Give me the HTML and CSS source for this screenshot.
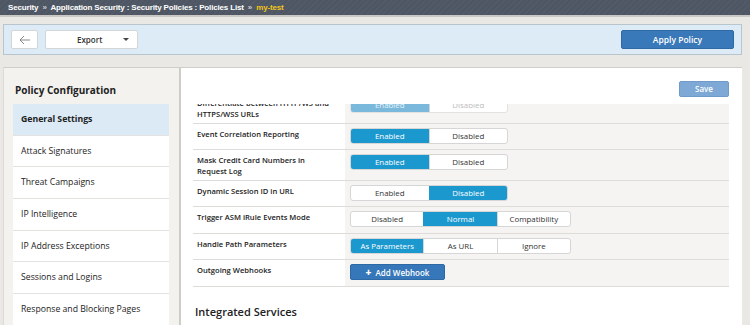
FILE: index.html
```html
<!DOCTYPE html>
<html lang="en">

<head>
    <meta charset="UTF-8">
    <title>Policies List - my-test</title>
    <link rel="stylesheet" href="styles.css">
</head>

<body>
    <!-- breadcrumb bar -->
    <div class="topBar">
        <span>Security</span>
        <span class="sep">&raquo;</span>
        <span>Application Security : Security Policies : Policies List</span>
        <span class="sep">&raquo;</span>
        <span class="current">my-test</span>
    </div>

    <!-- toolbar -->
    <div class="toolBar">
        <div class="backBtn">
            <svg width="12" height="10" viewBox="0 0 12 10">
                <path d="M5 1 L1 5 L5 9 M1 5 H11" fill="none" stroke="#8a8a8a" stroke-width="1"/>
            </svg>
        </div>
        <div class="exportBtn">
            <span>Export</span>
            <span class="caret"></span>
        </div>
        <div class="applyBtn">Apply Policy</div>
    </div>

    <div class="mainNode">
        <!-- left menu -->
        <div class="sideNode">
            <div class="sideTitle">Policy Configuration</div>
            <ul class="sideList">
                <li class="active">General Settings</li>
                <li>Attack Signatures</li>
                <li>Threat Campaigns</li>
                <li>IP Intelligence</li>
                <li>IP Address Exceptions</li>
                <li>Sessions and Logins</li>
                <li>Response and Blocking Pages</li>
            </ul>
        </div>

        <!-- settings -->
        <div class="contentNode">
            <div class="contentHead">
                <div class="saveBtn">Save</div>
            </div>
            <div class="scrollNode">
                <div class="settingList">
                    <div class="row tall">
                        <div class="label">Differentiate between HTTP/WS and HTTPS/WSS URLs</div>
                        <div class="value">
                            <div class="toggle two faded">
                                <span class="on">Enabled</span><span>Disabled</span>
                            </div>
                        </div>
                    </div>
                    <div class="row">
                        <div class="label">Event Correlation Reporting</div>
                        <div class="value">
                            <div class="toggle two">
                                <span class="on">Enabled</span><span>Disabled</span>
                            </div>
                        </div>
                    </div>
                    <div class="row tall">
                        <div class="label">Mask Credit Card Numbers in Request Log</div>
                        <div class="value">
                            <div class="toggle two">
                                <span class="on">Enabled</span><span>Disabled</span>
                            </div>
                        </div>
                    </div>
                    <div class="row">
                        <div class="label">Dynamic Session ID in URL</div>
                        <div class="value">
                            <div class="toggle two">
                                <span>Enabled</span><span class="on">Disabled</span>
                            </div>
                        </div>
                    </div>
                    <div class="row">
                        <div class="label">Trigger ASM iRule Events Mode</div>
                        <div class="value">
                            <div class="toggle three">
                                <span>Disabled</span><span class="on">Normal</span><span>Compatibility</span>
                            </div>
                        </div>
                    </div>
                    <div class="row">
                        <div class="label">Handle Path Parameters</div>
                        <div class="value">
                            <div class="toggle three">
                                <span class="on">As Parameters</span><span>As URL</span><span>Ignore</span>
                            </div>
                        </div>
                    </div>
                    <div class="row">
                        <div class="label">Outgoing Webhooks</div>
                        <div class="value">
                            <div class="addBtn"><b>+</b> Add Webhook</div>
                        </div>
                    </div>
                </div>
                <div class="sectionTitle">Integrated Services</div>
            </div>
        </div>
    </div>
</body>

</html>
```

FILE: styles.css
```css
* {
    margin: 0;
    padding: 0;
    list-style: none;
    box-sizing: border-box;
}

html, body {
    height: 100%;
}

body {
    display: flex;
    flex-direction: column;
    background: #e9e8e4;
    font-family: "Open Sans", "Liberation Sans", sans-serif;
    color: #222;
    overflow: hidden;
}

/* breadcrumb */
.topBar {
    height: 17px;
    padding-left: 8px;
    line-height: 15px;
    font-family: "Liberation Sans", Arial, sans-serif;
    font-size: 8px;
    font-weight: bold;
    letter-spacing: -0.16px;
    color: #fff;
    background: repeating-linear-gradient(135deg, #515a66 0, #515a66 2px, #4d5662 2px, #4d5662 4px);
    border-bottom: 2px solid #c9c8c4;
    white-space: nowrap;
}

.topBar .sep {
    color: #c8ccd2;
    margin: 0 2px;
}

.topBar .current {
    color: #f2c518;
}

/* toolbar */
.toolBar {
    display: flex;
    align-items: center;
    height: 31px;
    margin: 7px 8px 0 3px;
    padding: 0 7px;
    background: #dcebf5;
    border: 1px solid #b9c5cd;
}

.backBtn, .exportBtn {
    display: flex;
    align-items: center;
    height: 19px;
    background: #fff;
    border: 1px solid #d3d6d9;
    border-radius: 2px;
}

.backBtn {
    width: 27px;
    justify-content: center;
}

.exportBtn {
    width: 93px;
    margin-left: 7px;
    padding: 0 8px 0 31px;
    justify-content: space-between;
    font-size: 8px;
    font-weight: 600;
    color: #333;
}

.exportBtn .caret {
    width: 0;
    height: 0;
    border-left: 3px solid transparent;
    border-right: 3px solid transparent;
    border-top: 3px solid #444;
}

.applyBtn {
    width: 113px;
    height: 19px;
    margin-left: auto;
    line-height: 17px;
    text-align: center;
    font-size: 8.5px;
    font-weight: 600;
    color: #fff;
    background: #3a79b9;
    border: 1px solid #2f6aa6;
    border-radius: 2px;
}

/* main */
.mainNode {
    flex: 1;
    display: flex;
    margin: 12px 8px 0 3px;
    min-height: 0;
}

.sideNode {
    width: 178px;
    background: #f3f2ef;
    border-top: 1px solid #cfceca;
    border-left: 1px solid #dcdbd7;
    border-right: 2px solid #cdccc8;
}

.sideTitle {
    height: 36px;
    padding: 15px 0 0 11px;
    font-size: 10px;
    font-weight: bold;
    line-height: 14px;
    color: #222;
}

.sideList {
    margin: 0 10px 0 9px;
}

.sideList li {
    height: 31.7px;
    padding-left: 8px;
    line-height: 30px;
    font-size: 8.7px;
    color: #222;
    background: #fff;
    border-bottom: 1.5px solid #e3e2df;
}

.sideList li.active {
    font-weight: bold;
    background: #dbeaf5;
}

.contentNode {
    flex: 1;
    display: flex;
    flex-direction: column;
    background: #fff;
    border-top: 1px solid #cfceca;
    min-width: 0;
}

.contentHead {
    display: flex;
    justify-content: flex-end;
    height: 36px;
    padding: 13px 13px 0 0;
}

.saveBtn {
    width: 50px;
    height: 16px;
    line-height: 14px;
    text-align: center;
    font-size: 8px;
    font-weight: 600;
    color: #fff;
    background: #7ea8d5;
    border: 1px solid #6f9bcb;
    border-radius: 2px;
}

.scrollNode {
    flex: 1;
    overflow: hidden;
    padding: 0 13px 0 12px;
}

.settingList {
    margin-top: -11px;
}

.row {
    display: flex;
    height: 26.5px;
    border-bottom: 1.5px solid #dddcd9;
}

.row.tall {
    height: 30.5px;
}

.row .label {
    width: 152px;
    padding: 5px 14px 0 4px;
    font-size: 7.6px;
    font-weight: 600;
    line-height: 11px;
    color: #222;
}

.row .value {
    flex: 1;
    padding: 4px 0 0 5px;
    background: #f5f4f2;
}

.toggle {
    display: flex;
    height: 16px;
    background: #fff;
    border: 1px solid #d6d6d6;
    border-radius: 3px;
    overflow: hidden;
}

.toggle.two {
    width: 158px;
}

.toggle.three {
    width: 221px;
}

.toggle span {
    flex: 1;
    line-height: 14px;
    text-align: center;
    font-size: 7.9px;
    color: #333;
}

.toggle span + span {
    border-left: 1px solid #d6d6d6;
}

.toggle span.on {
    color: #fff;
    background: #1b99cf;
    border-color: #1b99cf;
}

.toggle.faded {
    border-color: #e2e2e2;
}

.toggle.faded span {
    color: #bcbcbc;
}

.toggle.faded span.on {
    color: #e8f3f9;
    background: #7ab9dc;
}

.addBtn {
    width: 95px;
    height: 16px;
    line-height: 15px;
    text-align: center;
    font-size: 8px;
    font-weight: 600;
    color: #fff;
    background: #3677b9;
    border: 1px solid #2d69a5;
    border-radius: 2px;
}

.addBtn b {
    font-size: 10px;
    margin-right: 2px;
}

.sectionTitle {
    padding: 17px 0 0 2px;
    font-size: 11px;
    font-weight: 600;
    color: #222;
}
```
